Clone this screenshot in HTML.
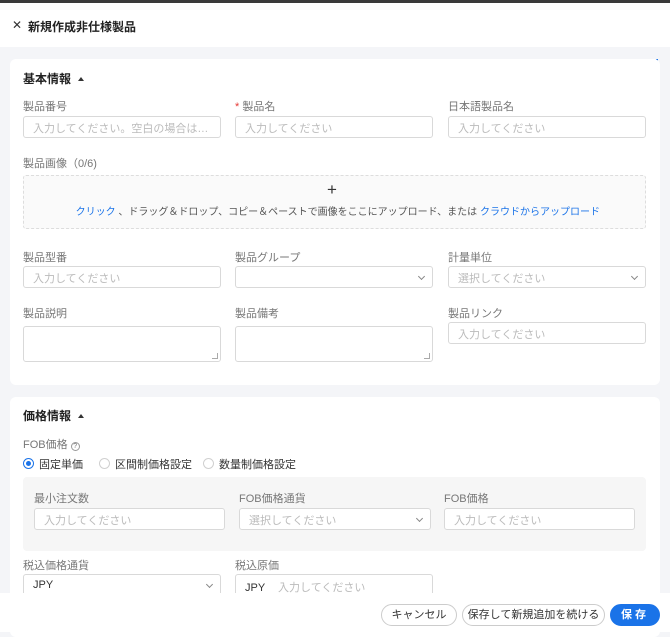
<!DOCTYPE html>
<html><head><meta charset="utf-8"><style>
*{box-sizing:border-box;margin:0;padding:0}
body{width:670px;height:632px;overflow:hidden;background:#f4f5f8;font-family:"Liberation Sans","Noto Sans CJK JP",sans-serif;position:relative;color:#222}
.a{position:absolute}
.lbl{position:absolute;font-size:11px;color:#777}
.in{position:absolute;height:22px;border:1px solid #d9d9d9;border-radius:3px;background:#fff;font-size:11px;color:#bbb;padding:3px 9px;white-space:nowrap;overflow:hidden;text-overflow:ellipsis}
.ta{position:absolute;height:36px;border:1px solid #d9d9d9;border-radius:3px;background:#fff}
.ta:after{content:"";position:absolute;right:2px;bottom:2px;width:5px;height:5px;border-right:1px solid #aaa;border-bottom:1px solid #aaa}
.chev{position:absolute;right:8px;top:7px;width:5px;height:5px;border-right:1px solid #888;border-bottom:1px solid #888;transform:rotate(45deg)}
.card{position:absolute;left:10px;width:650px;background:#fff;border-radius:6px}
.h{position:absolute;font-size:12px;font-weight:bold;color:#222}
.tri{display:inline-block;margin-left:7px;border-left:3px solid transparent;border-right:3px solid transparent;border-bottom:4px solid #333;vertical-align:2px}
.rad{position:absolute;width:11px;height:11px;border:1px solid #d0d0d0;border-radius:50%;background:#fff}
.rt{position:absolute;font-size:11px;color:#333}
.btn{position:absolute;top:604px;height:22px;border:1px solid #ccc;border-radius:11px;background:#fff;font-size:11px;text-align:center;line-height:20px;color:#333}
</style></head><body>
<div class="a" style="left:0;top:0;width:670px;height:3px;background:#3a3a3a"></div>
<div class="a" style="left:0;top:3px;width:670px;height:44px;background:#fff"></div>
<div class="a" style="left:12px;top:18px;font-size:12px;color:#333">✕</div>
<div class="a" style="left:28px;top:18px;font-size:12px;font-weight:bold">新規作成非仕様製品</div>
<div class="a" style="left:656px;top:59px;width:2px;height:20px;background:#1a73e8"></div>

<div class="card" style="top:59px;height:326px"></div>
<div class="h" style="left:23px;top:70px">基本情報<span class="tri"></span></div>
<div class="lbl" style="left:23px;top:98px">製品番号</div>
<div class="lbl" style="left:235px;top:98px"><span style="color:#e53935">*</span> 製品名</div>
<div class="lbl" style="left:448px;top:98px">日本語製品名</div>
<div class="in" style="left:23px;top:116px;width:198px">入力してください。空白の場合はシステムが自動生成</div>
<div class="in" style="left:235px;top:116px;width:198px">入力してください</div>
<div class="in" style="left:448px;top:116px;width:198px">入力してください</div>
<div class="lbl" style="left:23px;top:155px">製品画像（0/6)</div>
<div class="a" style="left:23px;top:175px;width:623px;height:54px;border:1px dashed #ddd;border-radius:3px;background:#fafafa"></div>
<div class="a" style="left:327px;top:180px;font-size:17px;color:#333;font-weight:300">+</div>
<div class="a" style="left:0;width:670px;top:203px;text-align:center;font-size:10px;color:#555">&nbsp;&nbsp;<span style="color:#1a73e8">クリック</span> 、ドラッグ＆ドロップ、コピー＆ペーストで画像をここにアップロード、または <span style="color:#1a73e8">クラウドからアップロード</span></div>
<div class="lbl" style="left:23px;top:249px">製品型番</div>
<div class="lbl" style="left:235px;top:249px">製品グループ</div>
<div class="lbl" style="left:448px;top:249px">計量単位</div>
<div class="in" style="left:23px;top:266px;width:198px">入力してください</div>
<div class="in" style="left:235px;top:266px;width:198px"><div class="chev"></div></div>
<div class="in" style="left:448px;top:266px;width:198px">選択してください<div class="chev"></div></div>
<div class="lbl" style="left:23px;top:305px">製品説明</div>
<div class="lbl" style="left:235px;top:305px">製品備考</div>
<div class="lbl" style="left:448px;top:305px">製品リンク</div>
<div class="ta" style="left:23px;top:326px;width:198px"></div>
<div class="ta" style="left:235px;top:326px;width:198px"></div>
<div class="in" style="left:448px;top:322px;width:198px">入力してください</div>

<div class="card" style="top:397px;height:240px"></div>
<div class="h" style="left:23px;top:407px">価格情報<span class="tri"></span></div>
<div class="lbl" style="left:23px;top:436px">FOB価格 <span style="display:inline-block;width:9px;height:9px;border:1px solid #999;border-radius:50%;font-size:7px;line-height:8px;text-align:center">?</span></div>
<div class="rad" style="left:23px;top:458px;border-color:#1a73e8"><div style="position:absolute;left:2px;top:2px;width:5px;height:5px;border-radius:50%;background:#1a73e8"></div></div>
<div class="rt" style="left:39px;top:456px">固定単価</div>
<div class="rad" style="left:99px;top:458px"></div>
<div class="rt" style="left:115px;top:456px">区間制価格設定</div>
<div class="rad" style="left:203px;top:458px"></div>
<div class="rt" style="left:219px;top:456px">数量制価格設定</div>
<div class="a" style="left:23px;top:477px;width:623px;height:74px;background:#f6f6f6;border-radius:4px"></div>
<div class="lbl" style="left:34px;top:490px">最小注文数</div>
<div class="lbl" style="left:239px;top:490px">FOB価格通貨</div>
<div class="lbl" style="left:444px;top:490px">FOB価格</div>
<div class="in" style="left:34px;top:508px;width:191px">入力してください</div>
<div class="in" style="left:239px;top:508px;width:192px">選択してください<div class="chev"></div></div>
<div class="in" style="left:444px;top:508px;width:191px">入力してください</div>
<div class="lbl" style="left:23px;top:557px">税込価格通貨</div>
<div class="lbl" style="left:235px;top:557px">税込原価</div>
<div class="in" style="left:23px;top:574px;width:198px;color:#333;padding-top:4px">JPY<div class="chev"></div></div>
<div class="in" style="left:235px;top:574px;width:198px;color:#333;padding-top:4px">JPY <span style="color:#bbb;margin-left:10px">入力してください</span></div>

<div class="a" style="left:0;top:593px;width:670px;height:39px;background:#fff"></div>
<div class="btn" style="left:381px;width:76px">キャンセル</div>
<div class="btn" style="left:462px;width:143px">保存して新規追加を続ける</div>
<div class="btn" style="left:610px;width:50px;background:#1a73e8;border-color:#1a73e8;color:#fff;font-weight:bold;letter-spacing:3px">保存</div>
</body></html>
